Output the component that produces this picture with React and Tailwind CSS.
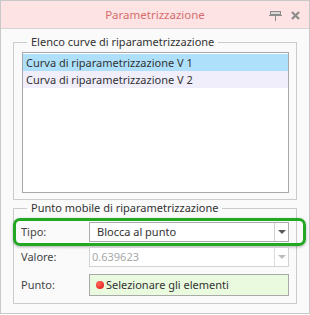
function Arrow({ color }) {
  return (
    <svg width="8" height="4" viewBox="0 0 8 4">
      <path d="M0 0 L8 0 L4 4 Z" fill={color} />
    </svg>
  )
}

function Combo({ text, disabled }) {
  return (
    <div
      className={
        'flex h-[20px] flex-1 items-center border bg-white ' +
        (disabled ? 'border-[#d2d2d2]' : 'border-[#acacac]')
      }
    >
      <span className={'flex-1 ' + (disabled ? 'pl-[2px] text-[#a9a9a9]' : 'pl-[7px] text-[#333]')}>{text}</span>
      <div
        className={
          'flex h-full w-[14px] items-center justify-center border-l ' +
          (disabled ? 'border-[#dcdcdc]' : 'border-[#d0d0d0]')
        }
      >
        <Arrow color={disabled ? '#bdbdbd' : '#5a5a5a'} />
      </div>
    </div>
  )
}

export default function App() {
  return (
    <div className="h-[315px] w-[310px] bg-white font-['Noto_Sans',sans-serif] text-[11px] leading-[16px] text-[#333]">
      <div className="flex h-[314px] w-[310px] flex-col border border-[#c8c8c8] bg-[#fafafa]">
        <div className="relative flex h-[28px] items-center justify-center border-b border-[#d4d4d4] bg-[#fde3e3]">
          <span className="text-[11.5px] text-[#d46e6e]">Parametrizzazione</span>
          <div className="absolute right-[9px] top-[10px] flex items-start gap-[9px]">
            <svg width="13" height="10" viewBox="0 0 13 10">
              <rect x="1.5" y="0.5" width="10" height="3" fill="#d8d8d8" stroke="#8c8c8c" />
              <line x1="0" y1="4.5" x2="13" y2="4.5" stroke="#8c8c8c" />
              <line x1="6.5" y1="5" x2="6.5" y2="10" stroke="#8c8c8c" />
            </svg>
            <svg width="9" height="9" viewBox="0 0 9 9">
              <path d="M1 1 L8 8 M8 1 L1 8" stroke="#8c8c8c" strokeWidth="2.2" />
            </svg>
          </div>
        </div>

        <div className="flex flex-col px-[12px] pt-[5px]">
          <fieldset className="border border-[#cbcbcb] pb-[6px] pl-[8px] pr-[7px]">
            <legend className="ml-[5px] px-[4px] leading-[16px] text-[#333]">Elenco curve di riparametrizzazione</legend>
            <div className="mt-[2px] flex h-[141px] flex-col border border-[#a8a8a8] bg-white pt-[1px]">
              <div className="flex h-[17px] items-center bg-[#aee0fb] pl-[3px]">Curva di riparametrizzazione V 1</div>
              <div className="flex h-[17px] items-center bg-[#f1eefb] pl-[3px]">Curva di riparametrizzazione V 2</div>
            </div>
          </fieldset>

          <fieldset className="border border-[#cbcbcb] pb-[7px] pl-[7px] pr-[7px]">
            <legend className="ml-[6px] px-[4px] leading-[16px] text-[#333]">Punto mobile di riparametrizzazione</legend>
            <div className="-ml-[8px] -mr-[17px] mt-[2px] flex items-center rounded-[7px] border-[3px] border-[#22a822] pb-[1px] pl-[5px] pr-[14px] pt-[1px] shadow-[0_1px_3px_rgba(0,0,0,0.3)]">
              <span className="w-[68px] text-[#444]">Tipo:</span>
              <Combo text="Blocca al punto" />
            </div>
            <div className="mt-[1px] flex items-center">
              <span className="w-[68px] text-[#444]">Valore:</span>
              <Combo text="0.639623" disabled />
            </div>
            <div className="mt-[7px] flex items-center">
              <span className="w-[68px] text-[#444]">Punto:</span>
              <div className="flex h-[22px] flex-1 items-center border border-[#a9a9a9] bg-[#eafadf] pl-[6px]">
                <span className="h-[8px] w-[8px] rounded-full bg-[radial-gradient(circle_at_35%_35%,#ff6a5a,#e01010)]" />
                <span className="ml-[2px]">Selezionare gli elementi</span>
              </div>
            </div>
          </fieldset>
        </div>
      </div>
    </div>
  )
}
